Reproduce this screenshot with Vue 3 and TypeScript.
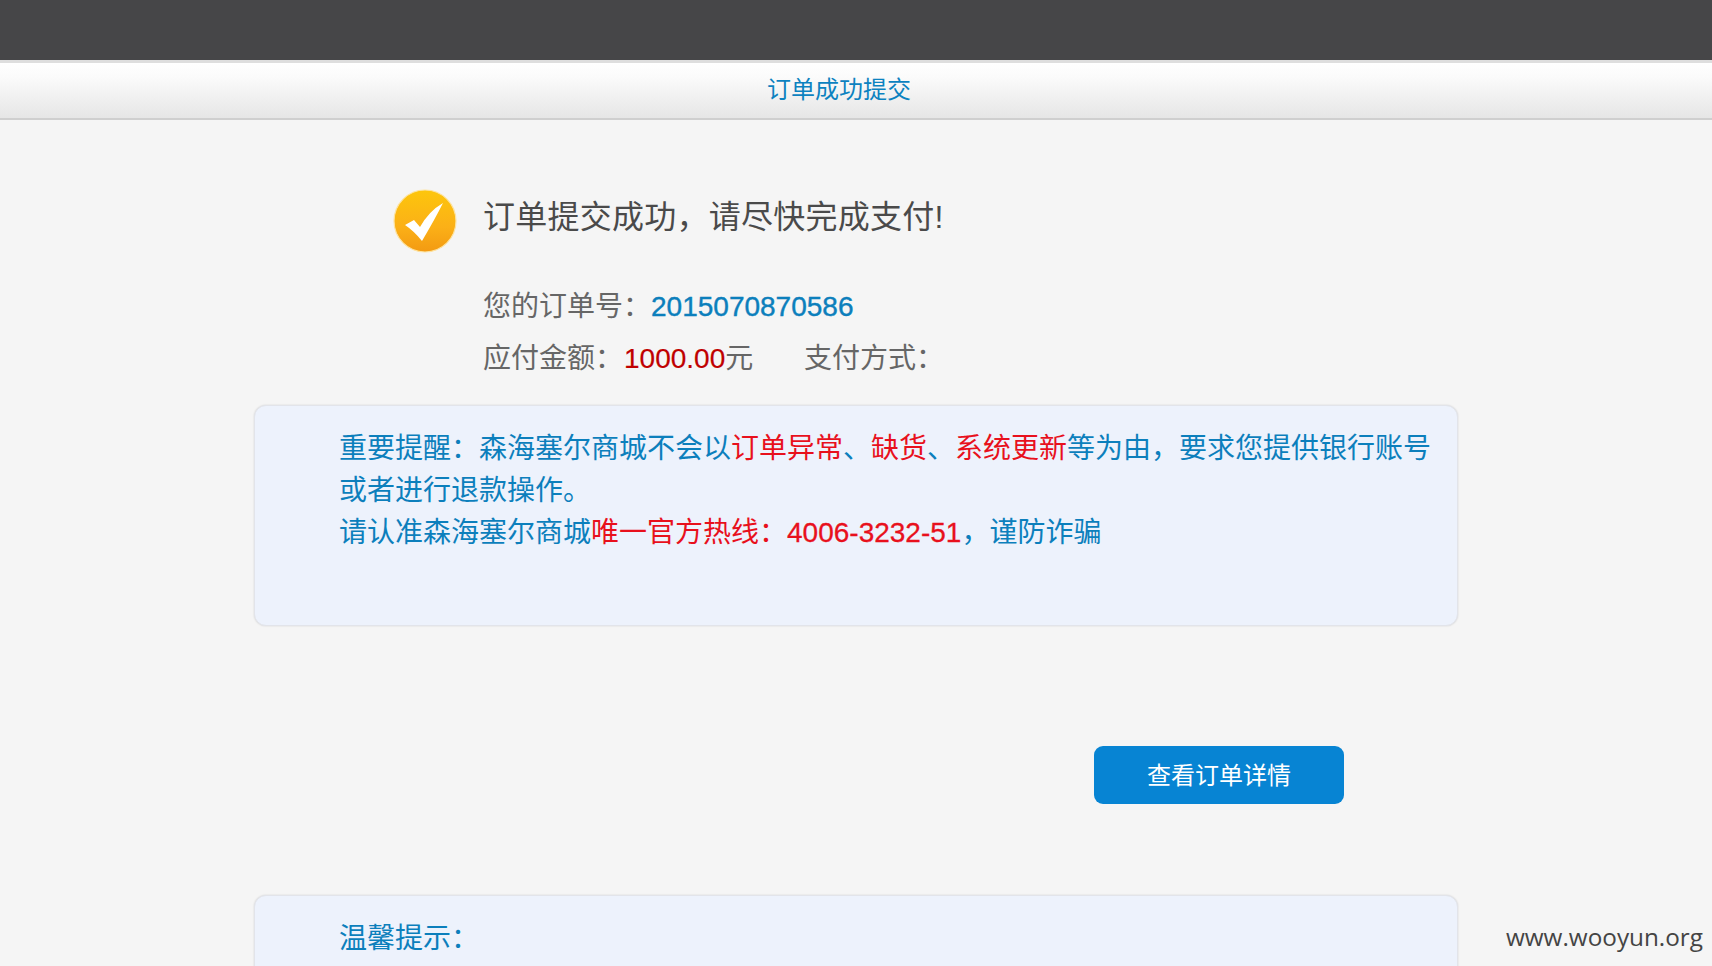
<script setup lang="ts">
const orderNo = '2015070870586'
const amount = '1000.00'
</script>

<template>
  <div class="page">
    <div class="top-bar"></div>
    <div class="sub-header">订单成功提交</div>

    <div class="content">
      <div class="result">
        <svg class="ok-icon" viewBox="0 0 64 64" width="64" height="64">
          <defs>
            <linearGradient id="okFill" x1="0" y1="0" x2="0" y2="1">
              <stop offset="0" stop-color="#fdc60c" />
              <stop offset="0.6" stop-color="#fbb017" />
              <stop offset="1" stop-color="#f39a12" />
            </linearGradient>
          </defs>
          <circle cx="32" cy="32" r="31" fill="url(#okFill)" stroke="#fde3a0" stroke-width="1.2" />
          <path d="M12 36 L21 31 L27 38 Q36 22 50 14 Q42 30 29 52 Q21 42 12 36 Z" fill="#fff" />
        </svg>
        <div class="result-text">
          <h2>订单提交成功，请尽快完成支付!</h2>
          <p class="line first">您的订单号：<span class="order-no">{{ orderNo }}</span></p>
          <p class="line">
            应付金额：<span class="amount">{{ amount }}</span>元
            <span class="pay-way">支付方式：</span>
          </p>
        </div>
      </div>

      <div class="notice">
        重要提醒：森海塞尔商城不会以<span class="red">订单异常</span>、<span class="red">缺货</span>、<span class="red">系统更新</span>等为由，要求您提供银行账号或者进行退款操作。<br />
        请认准森海塞尔商城<span class="red">唯一官方热线：<span class="num">4006-3232-51</span></span>，谨防诈骗
      </div>

      <div class="actions">
        <button class="btn-detail">查看订单详情</button>
      </div>

      <div class="notice tips">温馨提示：</div>
    </div>

    <div class="watermark">www.wooyun.org</div>
  </div>
</template>

<style>
html,
body {
  margin: 0;
  height: 966px;
  overflow: hidden;
  background: #f5f5f5;
}
</style>

<style scoped>
.page {
  position: relative;
  height: 966px;
  overflow: hidden;
  background: #f5f5f5;
  font-family: "Liberation Sans", "Noto Sans CJK SC", sans-serif;
}

.top-bar {
  height: 60px;
  background: #464648;
}

.sub-header {
  box-sizing: border-box;
  height: 60px;
  padding-right: 34px;
  border-top: 3px solid #dedede;
  border-bottom: 2px solid #cfcfcf;
  background: linear-gradient(#ffffff, #fbfbfb 25%, #e6e6e6);
  color: #0c82c0;
  font-size: 24px;
  line-height: 53px;
  text-align: center;
}

.content {
  width: 1204px;
  margin: 0 auto;
}

.result {
  display: flex;
  gap: 26px;
  padding: 69px 0 0 139px;
}

.ok-icon {
  flex-shrink: 0;
}

.result-text {
  color: #666;
}

.result-text h2 {
  margin: 0;
  color: #4a4a4a;
  font-size: 32px;
  font-weight: 400;
  letter-spacing: 0.25px;
  line-height: 56px;
}

.line {
  margin: 0;
  font-size: 28px;
  line-height: 52px;
}

.line.first {
  margin-top: 36px;
}

.order-no {
  color: #0c7fbc;
  -webkit-text-stroke: 0.4px #0c7fbc;
}

.amount {
  margin-left: 1px;
  color: #c00000;
  -webkit-text-stroke: 0.2px #c00000;
}

.pay-way {
  margin-left: 43px;
}

.notice {
  box-sizing: border-box;
  height: 221px;
  margin-top: 20px;
  padding: 22px 20px 0 84px;
  border-radius: 12px;
  border: 1px solid #e2e4ea;
  box-shadow: 0 0 2px rgba(0, 0, 0, 0.14);
  background: #edf2fc;
  color: #0c7fbc;
  font-size: 28px;
  line-height: 42px;
}

.red {
  color: #e8101c;
}

.num {
  -webkit-text-stroke: 0.3px #e8101c;
}

.actions {
  display: flex;
  justify-content: flex-end;
  padding: 120px 114px 0 0;
}

.btn-detail {
  width: 250px;
  height: 58px;
  padding: 0 0 3px;
  border: none;
  border-radius: 9px;
  background: #0784d3;
  color: #fff;
  font-family: inherit;
  font-size: 24px;
}

.notice.tips {
  height: 120px;
  margin-top: 91px;
}

.watermark {
  position: absolute;
  right: 9px;
  top: 920px;
  color: #444;
  font-family: "Open Sans", sans-serif;
  font-size: 24.3px;
  line-height: 34px;
}
</style>
